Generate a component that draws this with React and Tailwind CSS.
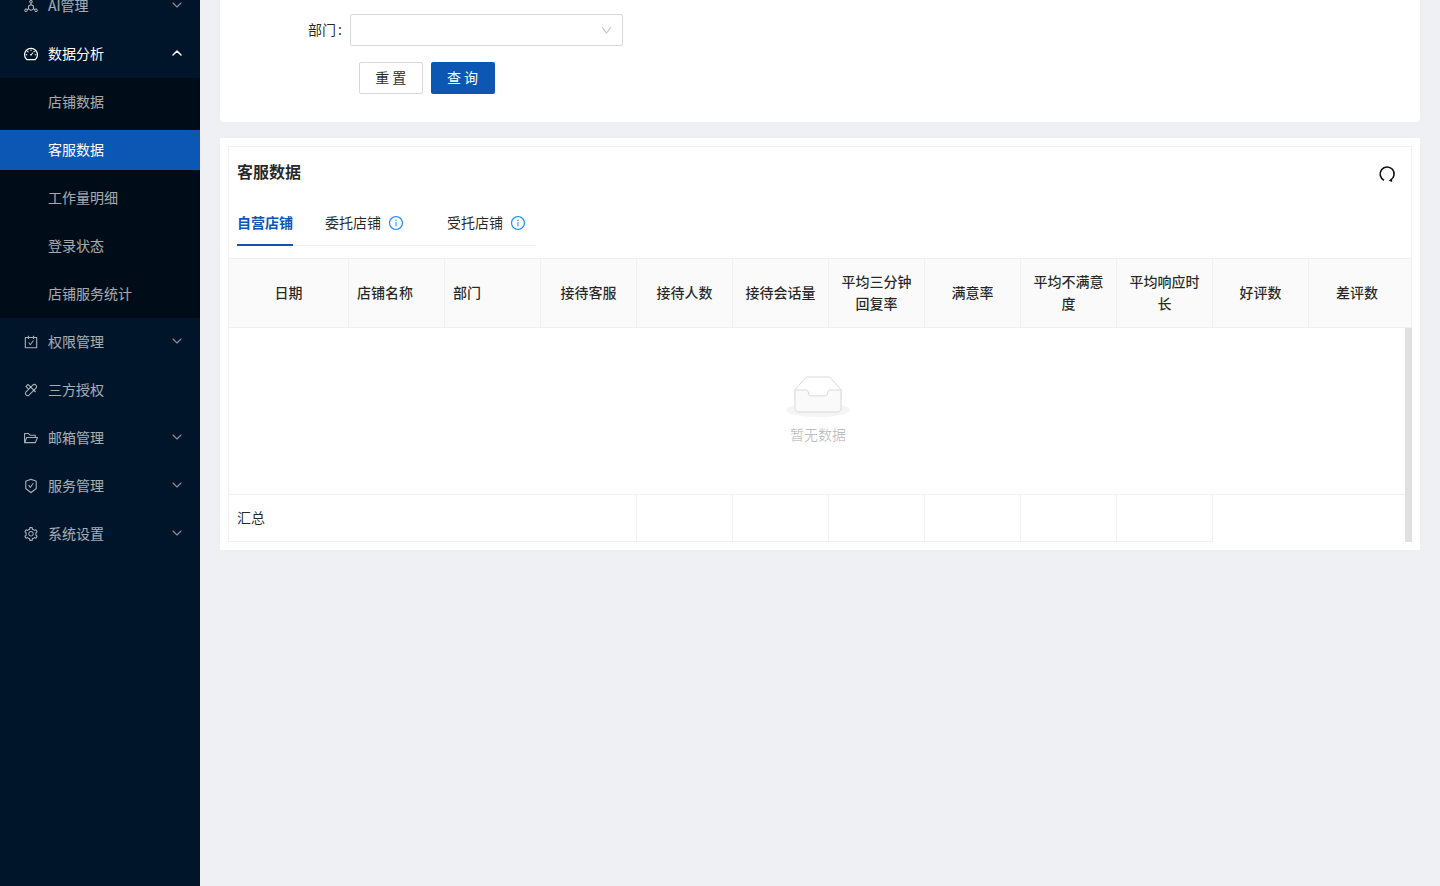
import { ChevronDown, ChevronUp } from 'lucide-react';
import {
  AiOutlineCarryOut,
  AiOutlineDashboard,
  AiOutlineDeploymentUnit,
  AiOutlineDown,
  AiOutlineFolderOpen,
  AiOutlineInfoCircle,
  AiOutlineSafetyCertificate,
  AiOutlineSetting,
} from 'react-icons/ai';

// Chain-like glyph of the 三方授权 entry, no package has this exact one
function LinkLoopIcon({ className }) {
  return (
    <svg className={className} viewBox="0 0 16 16" fill="none" stroke="currentColor" strokeWidth="1.1">
      <path d="M5 2.4l7.6 7.6" />
      <path d="M10 2.8a2.3 2.3 0 0 1 3.2 3.2l-7.2 7.2a2.3 2.3 0 0 1-3.2-3.2z" />
      <path d="M5 2.4L3 4.4l2.4 2.4" />
    </svg>
  );
}

const subMenu = ['店铺数据', '客服数据', '工作量明细', '登录状态', '店铺服务统计'];

const bottomMenu = [
  { label: '权限管理', icon: AiOutlineCarryOut, arrow: true },
  { label: '三方授权', icon: LinkLoopIcon, arrow: false },
  { label: '邮箱管理', icon: AiOutlineFolderOpen, arrow: true },
  { label: '服务管理', icon: AiOutlineSafetyCertificate, arrow: true },
  { label: '系统设置', icon: AiOutlineSetting, arrow: true },
];

const columns = [
  { label: '日期', width: 'w-[120px]', center: true },
  { label: '店铺名称', width: 'w-[96px]' },
  { label: '部门', width: 'w-[96px]' },
  { label: '接待客服', width: 'w-[96px]', center: true },
  { label: '接待人数', width: 'w-[96px]', center: true },
  { label: '接待会话量', width: 'w-[96px]', center: true },
  { label: '平均三分钟回复率', width: 'w-[96px]', center: true },
  { label: '满意率', width: 'w-[96px]', center: true },
  { label: '平均不满意度', width: 'w-[96px]', center: true },
  { label: '平均响应时长', width: 'w-[96px]', center: true },
  { label: '好评数', width: 'w-[96px]', center: true },
  { label: '差评数', width: 'w-[96px]', center: true },
];

function MenuItem({ icon: Icon, label, arrow, open }) {
  return (
    <div className={`flex h-12 items-center pl-[23px] pr-[15px] text-sm ${open ? 'text-white' : 'text-white/65'}`}>
      <Icon className="mr-[9px] size-4 shrink-0" />
      <span className="flex-1 pb-[2px]">{label}</span>
      {arrow && (open
        ? <ChevronUp className="mb-[2px] size-4" strokeWidth={2.25} />
        : <ChevronDown className="mb-[2px] size-4 opacity-80" strokeWidth={1.75} />)}
    </div>
  );
}

function Sidebar() {
  return (
    <aside className="h-full w-[200px] shrink-0 overflow-hidden bg-[#001529]">
      <div className="-mt-[18px]">
        <MenuItem icon={AiOutlineDeploymentUnit} label="AI管理" arrow />
        <MenuItem icon={AiOutlineDashboard} label="数据分析" arrow open />
      </div>
      <div className="bg-[#000c17] py-1">
        {subMenu.map((item, i) => (
          <div
            key={item}
            className={`flex h-10 items-center pb-[2px] pl-12 text-sm ${i < subMenu.length - 1 ? 'mb-2' : ''} ${
              i === 1 ? 'bg-[#0c57b4] text-white' : 'text-white/65'
            }`}
          >
            {item}
          </div>
        ))}
      </div>
      {bottomMenu.map((item) => (
        <MenuItem key={item.label} {...item} />
      ))}
    </aside>
  );
}

function SearchForm() {
  return (
    <section className="rounded-b-[4px] bg-white pb-7 pt-[14px]">
      <div className="flex items-center">
        <label className="w-[122px] pb-[2px] text-right text-sm text-black/85">
          部门<span className="ml-[2px]">:</span>
        </label>
        <div className="ml-2 flex h-8 w-[273px] items-center justify-end rounded-[2px] border border-[#d9d9d9] bg-white pr-[9px]">
          <AiOutlineDown className="size-[13px] text-black/25" />
        </div>
      </div>
      <div className="ml-[139px] mt-4 flex gap-2">
        <button type="button" className="h-8 w-[63.5px] rounded-[2px] border border-[#d9d9d9] bg-white pb-[2px] text-sm text-black/85">
          重 置
        </button>
        <button type="button" className="h-8 w-[64px] rounded-[2px] bg-[#0c57b4] pb-[2px] text-sm text-white">
          查 询
        </button>
      </div>
    </section>
  );
}

function Tabs() {
  return (
    <div className="mt-[18px] flex w-[299px] border-b border-[#f0f0f0] text-sm text-black/85">
      <div className="-mb-px flex h-[45px] items-center border-b-2 border-[#0c57b4] pb-[2px] font-semibold text-[#0c57b4]">
        自营店铺
      </div>
      <div className="ml-8 flex h-[44px] items-center pb-[2px]">
        委托店铺
        <AiOutlineInfoCircle className="ml-[7px] mt-[2px] size-4 text-[#1890ff]" />
      </div>
      <div className="ml-[43px] flex h-[44px] items-center pb-[2px]">
        受托店铺
        <AiOutlineInfoCircle className="ml-[7px] mt-[2px] size-4 text-[#1890ff]" />
      </div>
    </div>
  );
}

function EmptyIcon() {
  return (
    <svg width="64" height="41" viewBox="0 0 64 41">
      <g transform="translate(0 1)" fill="none" fillRule="evenodd">
        <ellipse fill="#f5f5f5" cx="32" cy="33" rx="32" ry="7" />
        <g fillRule="nonzero" stroke="#d9d9d9">
          <path d="M55 12.76L44.854 1.258C44.367.474 43.656 0 42.907 0H21.093c-.749 0-1.46.474-1.947 1.257L9 12.761V22h46v-9.24z" />
          <path
            d="M41.613 15.931c0-1.605.994-2.93 2.227-2.931H55v18.137C55 33.26 53.68 35 52.05 35h-40.1C10.32 35 9 33.259 9 31.137V13h11.16c1.233 0 2.227 1.323 2.227 2.928v.022c0 1.605 1.005 2.901 2.237 2.901h14.752c1.232 0 2.237-1.308 2.237-2.913v-.007z"
            fill="#fafafa"
          />
        </g>
      </g>
    </svg>
  );
}

function DataTable() {
  return (
    <div className="mt-3 text-sm text-black/85">
      {/* Header */}
      <div className="flex h-[70px] border-y border-[#f0f0f0] bg-[#fafafa]">
        {columns.map((col) => (
          <div
            key={col.label}
            className={`flex shrink-0 items-center border-r border-[#f0f0f0] px-2 pb-[2px] font-medium leading-[22px] last:border-r-0 ${col.width} ${
              col.center ? 'justify-center text-center' : ''
            }`}
          >
            {col.label}
          </div>
        ))}
      </div>
      {/* Body + summary, scrollbar track runs next to both */}
      <div className="flex">
        <div className="w-[1176px] shrink-0">
          <div className="flex h-[166px] flex-col items-center pl-[2px] pt-[48px]">
            <EmptyIcon />
            <span className="mt-[7px] text-black/25">暂无数据</span>
          </div>
          <div className="flex h-[48px] border-t border-[#f0f0f0]">
            <div className="flex w-[408px] items-center border-b border-r border-[#f0f0f0] px-2 pb-[2px]">汇总</div>
            {[0, 1, 2, 3, 4, 5].map((i) => (
              <div key={i} className="w-[96px] border-b border-r border-[#f0f0f0]" />
            ))}
          </div>
        </div>
        <div className="-mr-px w-[7px] shrink-0 bg-[#e1e1e1]" />
      </div>
    </div>
  );
}

function ServiceCard() {
  return (
    <section className="mt-4 bg-white p-2">
      <div className="border-x border-t border-[#f0f0f0]">
        <div className="px-2 pt-3">
          <div className="flex items-start justify-between pr-[7px]">
            <h2 className="text-base font-semibold leading-6 text-black/85">客服数据</h2>
            <svg className="mt-[6px]" width="18" height="18" viewBox="0 0 18 18" fill="none" stroke="#111" strokeWidth="1.6">
              <path d="M6 15.2A7 7 0 1 1 12.6 15" />
              <path d="M10.6 15.8l3.4-2.2.2 3.4z" fill="#111" stroke="none" />
            </svg>
          </div>
          <Tabs />
        </div>
        <DataTable />
      </div>
    </section>
  );
}

export default function App() {
  return (
    <div className="flex h-[886px] overflow-hidden bg-[#eef0f4] font-['Noto_Sans_CJK_SC','Noto_Sans',sans-serif]">
      <Sidebar />
      <main className="min-w-0 flex-1 px-5">
        <SearchForm />
        <ServiceCard />
      </main>
    </div>
  );
}
